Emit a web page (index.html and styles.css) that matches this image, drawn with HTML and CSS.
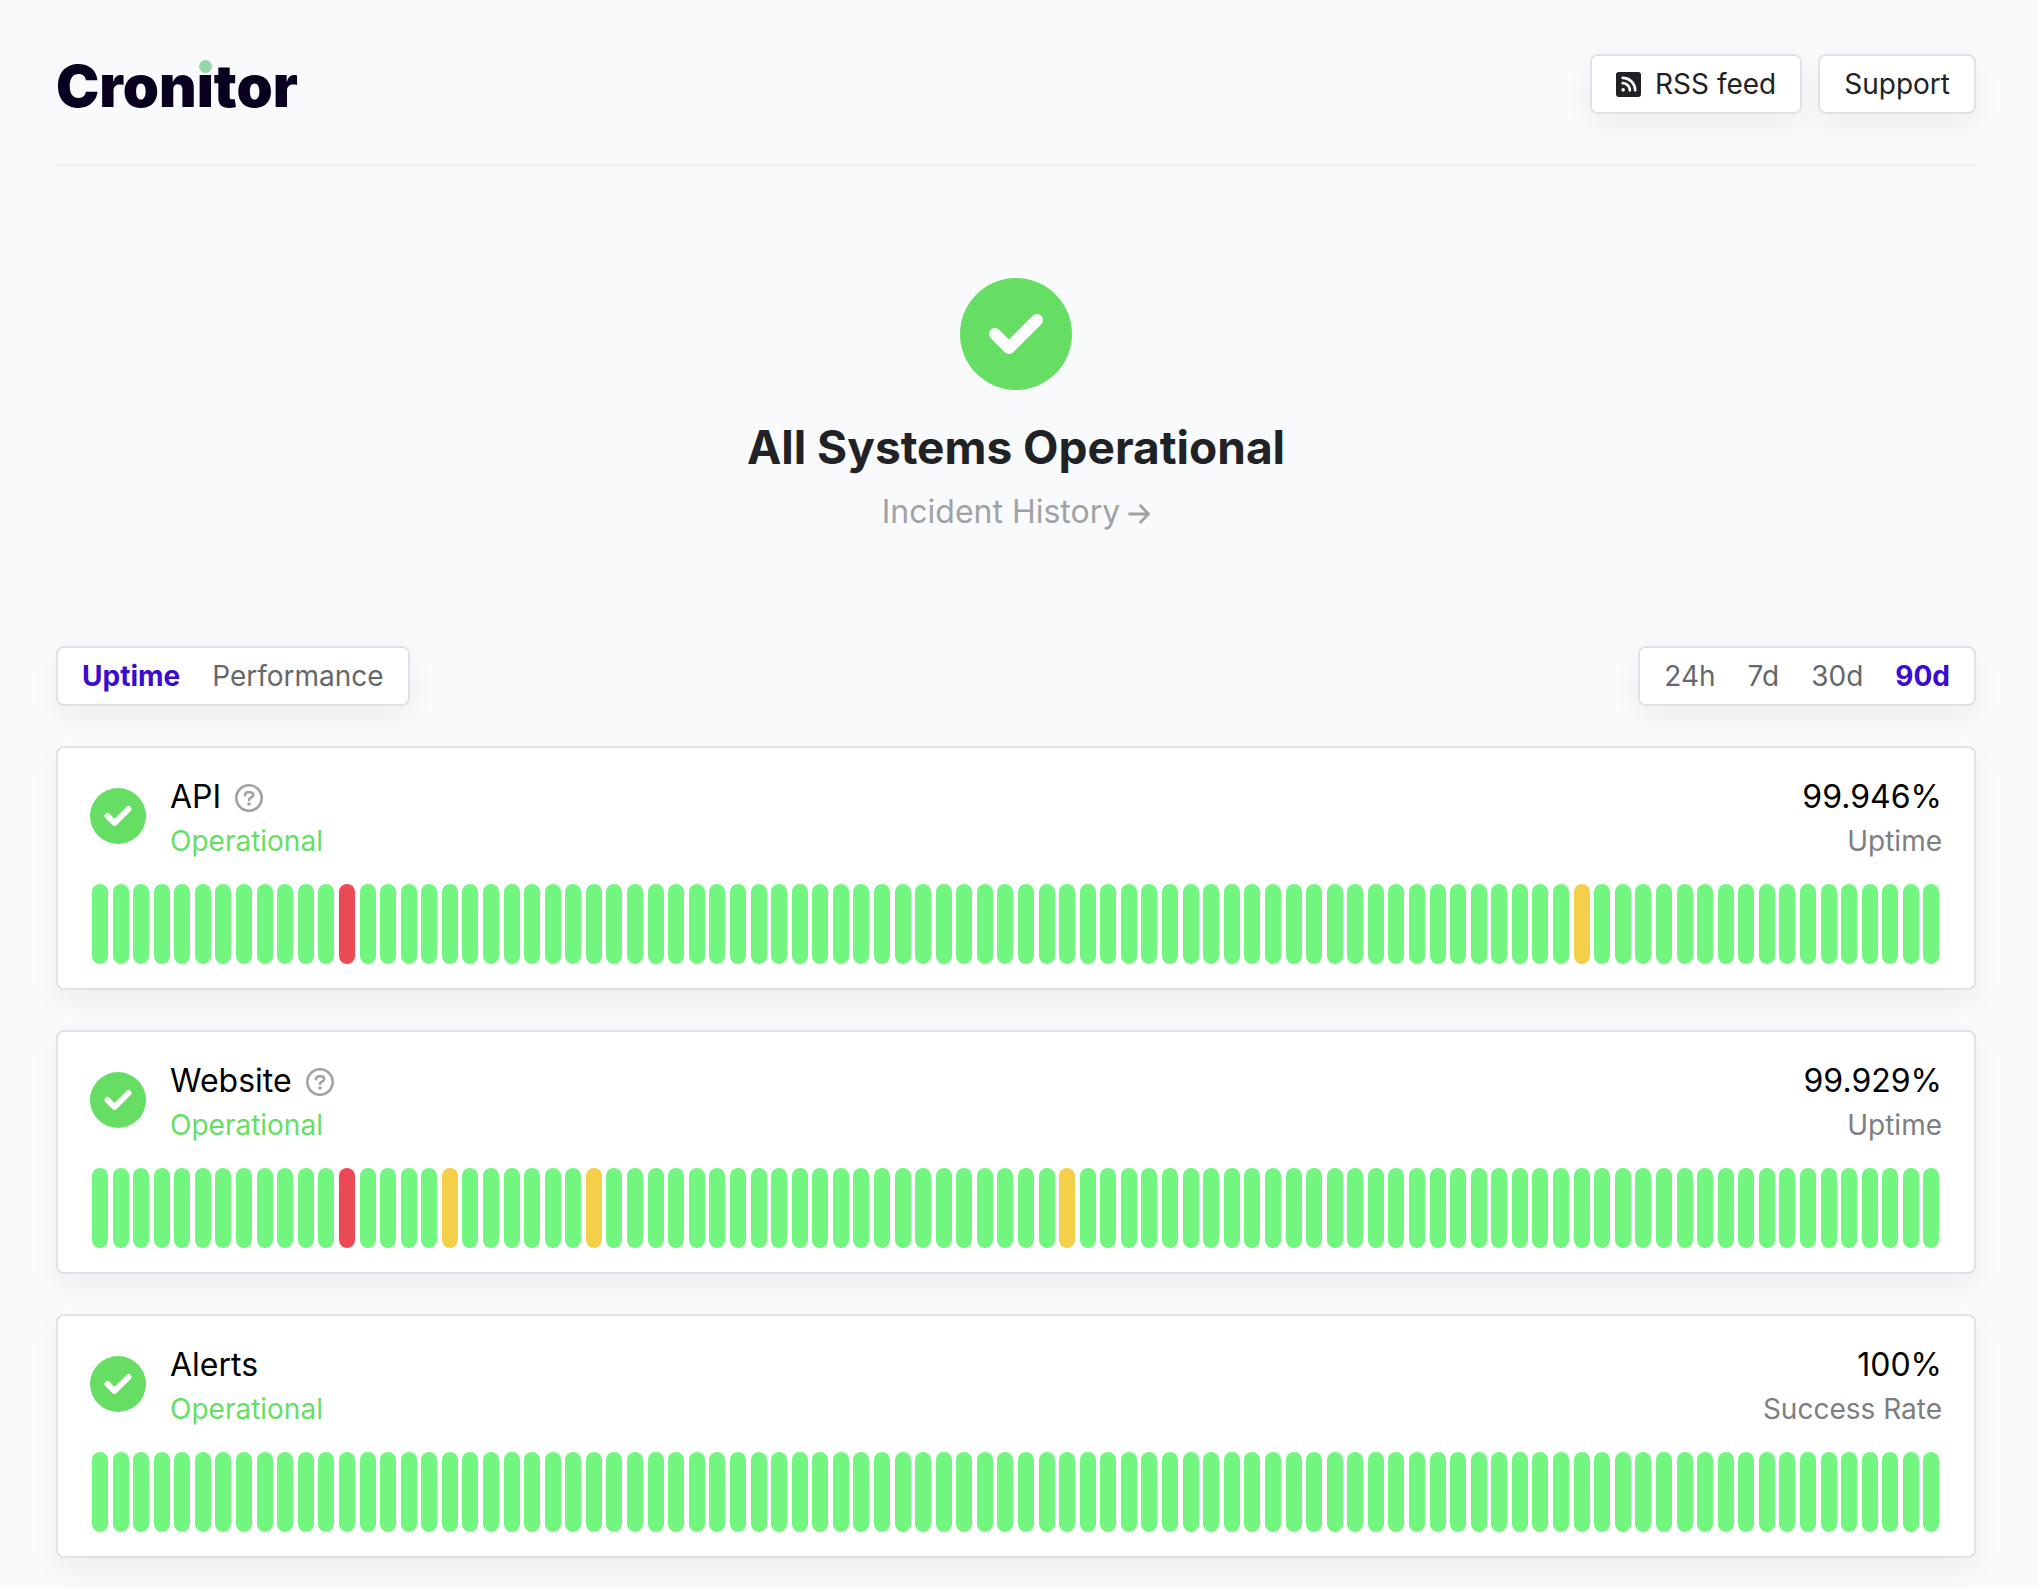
FILE: index.html
```html
<!DOCTYPE html>
<html lang="en">
<head>
<meta charset="utf-8">
<title>Cronitor Status</title>
<link rel="stylesheet" href="styles.css">
</head>
<body>
<svg width="0" height="0" class="defs" aria-hidden="true">
  <symbol id="check" viewBox="0 0 112 112">
    <circle cx="56" cy="56" r="56" fill="#66de64"/>
    <path d="M35 56L49 70L77 42" fill="none" stroke="#fff" stroke-width="12" stroke-linecap="round" stroke-linejoin="round"/>
  </symbol>
  <symbol id="help" viewBox="0 0 28 28">
    <circle cx="14" cy="14" r="12.7" fill="none" stroke="#a1a2a7" stroke-width="2.6"/>
    <path d="M10 11.2C10 9.2 11.3 8.2 13 8.2H15C16.900 8.200 18.200 9.300 18.200 11C18.200 13.700 14 13.700 14 16" fill="none" stroke="#a1a2a7" stroke-width="2.600" stroke-linecap="round"/>
    <circle cx="14" cy="20" r="1.800" fill="#a1a2a7"/>
  </symbol>
</svg>
<div class="page">
  <header class="header">
    <a class="logo" href="#">Cron<span class="logo-i">i</span>tor</a>
    <nav class="actions">
      <a class="button" href="#">
        <svg class="rss" viewBox="0 32 448 448" aria-hidden="true"><path fill="currentColor" d="M48 32C21 32 0 53 0 80V432c0 27 21 48 48 48H400c27 0 48-21 48-48V80c0-27-21-48-48-48H48zM96 136c0-13.300 10.700-24 24-24c137 0 248 111 248 248c0 13.300-10.700 24-24 24s-24-10.700-24-24c0-110.500-89.500-200-200-200c-13.300 0-24-10.700-24-24zm0 96c0-13.300 10.700-24 24-24c83.900 0 152 68.100 152 152c0 13.300-10.700 24-24 24s-24-10.700-24-24c0-57.400-46.600-104-104-104c-13.300 0-24-10.700-24-24zm0 120a32 32 0 1 1 64 0 32 32 0 1 1-64 0z"/></svg>
        RSS feed
      </a>
      <a class="button" href="#">Support</a>
    </nav>
  </header>

  <section class="hero">
    <svg class="hero-icon" aria-hidden="true"><use href="#check"/></svg>
    <h1 class="hero-title">All Systems Operational</h1>
    <a class="history" href="#">Incident History
      <svg class="arrow" viewBox="0 0 22 20" aria-hidden="true"><path d="M1.500 10H20M12.500 1.800L20.500 10L12.500 18.200" fill="none" stroke="currentColor" stroke-width="2.800" stroke-linecap="round" stroke-linejoin="round"/></svg>
    </a>
  </section>

  <div class="filters">
    <div class="tabs">
      <button class="tab active" type="button">Uptime</button>
      <button class="tab" type="button">Performance</button>
    </div>
    <div class="tabs">
      <button class="tab" type="button">24h</button>
      <button class="tab" type="button">7d</button>
      <button class="tab" type="button">30d</button>
      <button class="tab active" type="button">90d</button>
    </div>
  </div>

  <main class="monitors">
    <article class="card">
      <div class="summary">
        <svg class="status-icon" aria-hidden="true"><use href="#check"/></svg>
        <div class="info">
          <h2 class="name">API <svg class="help" aria-hidden="true"><use href="#help"/></svg></h2>
          <p class="status">Operational</p>
        </div>
        <div class="metric">
          <p class="value">99.946%</p>
          <p class="label">Uptime</p>
        </div>
      </div>
      <div class="bars" data-down="12" data-degraded="72"></div>
    </article>
    <article class="card">
      <div class="summary">
        <svg class="status-icon" aria-hidden="true"><use href="#check"/></svg>
        <div class="info">
          <h2 class="name">Website <svg class="help" aria-hidden="true"><use href="#help"/></svg></h2>
          <p class="status">Operational</p>
        </div>
        <div class="metric">
          <p class="value">99.929%</p>
          <p class="label">Uptime</p>
        </div>
      </div>
      <div class="bars" data-down="12" data-degraded="17,24,47"></div>
    </article>
    <article class="card">
      <div class="summary">
        <svg class="status-icon" aria-hidden="true"><use href="#check"/></svg>
        <div class="info">
          <h2 class="name">Alerts</h2>
          <p class="status">Operational</p>
        </div>
        <div class="metric">
          <p class="value">100%</p>
          <p class="label">Success Rate</p>
        </div>
      </div>
      <div class="bars" data-down="" data-degraded=""></div>
    </article>
  </main>
</div>
<script src="script.js"></script>
</body>
</html>
```
FILE: styles.css
```css
* { box-sizing: border-box; }

body {
  margin: 0;
  background: #f9fafc;
  color: #212226;
  font-family: Inter, "Liberation Sans", sans-serif;
  font-size: 28px;
}

a { color: inherit; text-decoration: none; }
h1, h2, p { margin: 0; font-weight: 400; }
svg { flex: none; }
.defs { position: absolute; }

.page { padding: 54px 62px 30px 56px; }

.header {
  display: flex;
  justify-content: space-between;
  align-items: flex-start;
  padding-bottom: 46px;
  border-bottom: 2px solid #edeef1;
}

.logo {
  color: #09001f;
  font-size: 58px;
  font-weight: 900;
  line-height: 64px;
}

/* The stem keeps the wordmark colour; the dot is drawn as a green circle. */
.logo-i {
  position: relative;
  background: linear-gradient(transparent 30%, #09001f 30%);
  -webkit-background-clip: text;
  background-clip: text;
  color: transparent;
}

.logo-i::after {
  content: "";
  position: absolute;
  top: 9px;
  left: 2px;
  width: 13px;
  height: 13px;
  border-radius: 50%;
  background: #97d6a6;
}

.actions { display: flex; gap: 16px; }

.button, .tabs {
  display: flex;
  align-items: center;
  height: 60px;
  padding: 0 24px;
  border: 2px solid #e1e2e7;
  border-radius: 8px;
  background: #fff;
  box-shadow: 0 12px 28px rgba(0, 0, 0, 0.05);
}

.button { gap: 14px; }
.rss { width: 25px; height: 25px; }

.hero {
  display: flex;
  flex-direction: column;
  align-items: center;
  padding: 112px 0;
}

.hero-icon { width: 112px; height: 112px; }

.hero-title {
  margin-top: 27px;
  font-size: 46px;
  font-weight: 700;
  line-height: 60px;
}

.history {
  display: flex;
  align-items: center;
  gap: 8px;
  margin-top: 13px;
  color: #a1a2a5;
  font-size: 32px;
  line-height: 44px;
}

.arrow { width: 22px; height: 20px; margin-top: 4px; }

.filters { display: flex; justify-content: space-between; }
.tabs { gap: 32px; }

.tab {
  padding: 0;
  border: 0;
  background: none;
  color: #66676b;
  font: inherit;
}

.tab.active { color: #3a0bd0; font-weight: 700; }

.monitors { display: grid; gap: 40px; margin-top: 40px; }

.card {
  padding: 27px 32px 24px;
  border: 2px solid #e1e2e7;
  border-radius: 8px;
  background: #fff;
  box-shadow: 0 12px 28px rgba(0, 0, 0, 0.05);
}

.summary {
  display: flex;
  gap: 24px;
  line-height: 44px;
}

.status-icon { width: 56px; height: 56px; margin-top: 13px; }
.info { flex: 1; }

.name {
  display: flex;
  align-items: center;
  gap: 14px;
  color: #000;
  font-size: 32px;
}

.help { width: 28px; height: 28px; margin-top: 2px; }
.status { color: #66de64; }
.metric { text-align: right; }
.value { color: #000; font-size: 32px; }
.label { color: #7d7e82; }

.bars {
  display: flex;
  justify-content: space-between;
  height: 80px;
  margin: 21px 2px 0;
}

.bar { width: 16px; border-radius: 8px; background: #72f680; }
.bar-down { background: #eb4954; }
.bar-degraded { background: #f4cf49; }
```
FILE: script.js
```js
const DAYS = 90;

for (const row of document.querySelectorAll('.bars')) {
  const down = row.dataset.down.split(',');
  const degraded = row.dataset.degraded.split(',');
  for (let day = 0; day < DAYS; day++) {
    const bar = document.createElement('span');
    bar.className = 'bar';
    if (down.includes(String(day))) bar.classList.add('bar-down');
    if (degraded.includes(String(day))) bar.classList.add('bar-degraded');
    row.append(bar);
  }
}
```
